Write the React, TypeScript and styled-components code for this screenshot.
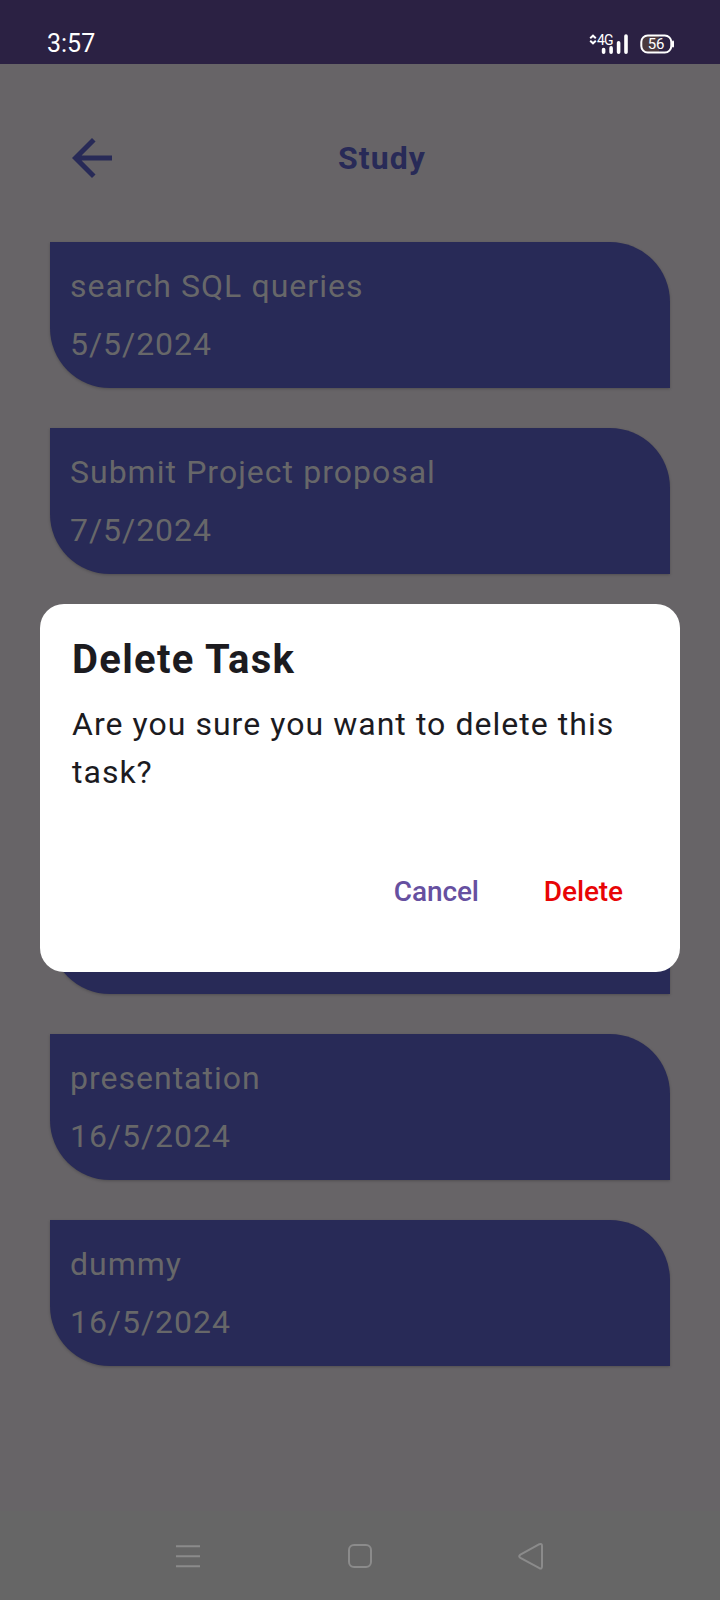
import React from "react";
import styled, { createGlobalStyle } from "styled-components";

const GlobalStyle = createGlobalStyle`
  * { box-sizing: border-box; }
  body {
    margin: 0;
    background: #676467;
    font-family: Roboto, "Liberation Sans", sans-serif;
  }
  button {
    border: 0;
    padding: 0;
    background: none;
    font: inherit;
    display: flex;
  }
`;

const Screen = styled.div`
  position: relative;
  display: flex;
  flex-direction: column;
  width: 720px;
  height: 1600px;
  overflow: hidden;
  background: #676467;
`;

const StatusBar = styled.header`
  display: flex;
  justify-content: space-between;
  align-items: flex-start;
  height: 64px;
  padding: 28px 45px 0 47px;
  background: #2b2143;
  color: #fff;
`;

const Clock = styled.time`
  font-size: 25px;
  line-height: 32px;
  letter-spacing: 0;
`;

const StatusIcons = styled.div`
  display: flex;
  gap: 12px;
  padding-top: 5px;
`;

const Signal = styled.div`
  position: relative;
  width: 39px;
  height: 22px;
  svg { display: block; }
`;

const Network = styled.span`
  position: absolute;
  left: 8px;
  top: 0;
  font-size: 14px;
  line-height: 14px;
  letter-spacing: -0.9px;
`;

const Battery = styled.div`
  display: grid;
  width: 35px;
  height: 22px;
  svg, span { grid-area: 1 / 1; }
`;

const BatteryLevel = styled.span`
  width: 32px;
  text-align: center;
  font-size: 15px;
  line-height: 22px;
  letter-spacing: -0.3px;
  z-index: 1;
`;

const TopBar = styled.nav`
  display: flex;
  align-items: center;
  height: 60px;
  margin: 64px 50px 54px 62px;
  color: #282a57;
`;

const BackButton = styled.button`
  width: 60px;
  color: inherit;
`;

const PageTitle = styled.h1`
  margin: 0 0 0 216px;
  font-size: 32px;
  line-height: 48px;
  font-weight: 700;
  letter-spacing: 1.1px;
`;

const TaskList = styled.main`
  display: flex;
  flex: 1;
  flex-direction: column;
  gap: 40px;
  padding: 0 50px;
`;

const Card = styled.article<{ $tall?: boolean }>`
  display: flex;
  flex-direction: column;
  gap: 10px;
  height: ${(p) => (p.$tall ? 194 : 146)}px;
  padding: 20px;
  border-radius: 0 60px 0 60px;
  background: #282a57;
  box-shadow: 0 1px 3px rgba(0, 0, 0, 0.22);
  color: #676769;
`;

const CardText = styled.div`
  font-size: 32px;
  line-height: 48px;
  letter-spacing: 1px;
  word-spacing: 0.3px;
  white-space: nowrap;
`;

const CardDate = styled(CardText)`
  letter-spacing: 0.95px;
`;

const NavBar = styled.footer`
  display: flex;
  justify-content: space-between;
  align-items: flex-start;
  height: 89px;
  padding: 29px 174px 0;
  background: #666;
  color: #8b8b8b;
  svg { display: block; }
`;

const Dialog = styled.section`
  position: absolute;
  left: 40px;
  top: 604px;
  width: 640px;
  height: 368px;
  display: flex;
  flex-direction: column;
  padding: 32px;
  border-radius: 24px;
  background: #fff;
  color: #1c1b1f;
`;

const DialogTitle = styled.h2`
  margin: 0 0 16px;
  font-size: 40px;
  line-height: 48px;
  font-weight: 700;
  letter-spacing: 1.3px;
`;

const DialogBody = styled.p`
  margin: 0;
  font-size: 32px;
  line-height: 48px;
  letter-spacing: 1px;
  word-spacing: 0.2px;
`;

const Actions = styled.div`
  display: flex;
  justify-content: flex-end;
  gap: 65px;
  margin-top: 76px;
  padding-right: 25px;
`;

const Action = styled.button<{ $danger?: boolean }>`
  font-size: 28px;
  line-height: 40px;
  font-weight: 500;
  letter-spacing: -0.1px;
  color: ${(p) => (p.$danger ? "#e80505" : "#6650a0")};
`;

const tasks = [
  { name: "search SQL queries", date: "5/5/2024" },
  { name: "Submit Project proposal", date: "7/5/2024" },
  {},
  { tall: true },
  { name: "presentation", date: "16/5/2024" },
  { name: "dummy", date: "16/5/2024" },
] as { name?: string; date?: string; tall?: boolean }[];

export default function App() {
  return (
    <Screen>
      <GlobalStyle />
      <StatusBar>
        <Clock>3:57</Clock>
        <StatusIcons>
          <Signal>
            <svg width="39" height="22" fill="none" stroke="#fff">
              <path d="M1.2 5.2 L4 2.7 L6.8 5.2 M1.2 7.8 L4 10.3 L6.8 7.8" strokeWidth="2" />
              <path d="M14.6 16.5v2.7M22.1 14.9v4.3M29.6 9.8v9.4M37 3v16.2" strokeWidth="3.6" strokeLinecap="round" />
            </svg>
            <Network>4G</Network>
          </Signal>
          <Battery>
            <svg width="35" height="22" fill="none">
              <path d="M8 3h11v16H8a6 6 0 0 1-6-6V9a6 6 0 0 1 6-6z" fill="#4b3a3e" />
              <rect x="1.3" y="2.5" width="30" height="17" rx="6.5" stroke="#fff" strokeWidth="2" />
              <path d="M33 8.6v4.8" stroke="#fff" strokeWidth="2" strokeLinecap="round" />
            </svg>
            <BatteryLevel>56</BatteryLevel>
          </Battery>
        </StatusIcons>
      </StatusBar>
      <TopBar>
        <BackButton aria-label="Back">
          <svg width="60" height="60" viewBox="0 0 24 24" fill="currentColor">
            <path d="M20 11H7.83l5.59-5.59L12 4l-8 8 8 8 1.41-1.41L7.83 13H20v-2z" />
          </svg>
        </BackButton>
        <PageTitle>Study</PageTitle>
      </TopBar>
      <TaskList>
        {tasks.map((task, i) => (
          <Card key={i} $tall={task.tall}>
            {task.name && <CardText>{task.name}</CardText>}
            {task.date && <CardDate>{task.date}</CardDate>}
          </Card>
        ))}
      </TaskList>
      <NavBar>
        <svg width="28" height="32" fill="none" stroke="currentColor" strokeWidth="2">
          <path d="M2 6.3h24M2 16.3h24M2 26.3h24" />
        </svg>
        <svg width="28" height="32" fill="none" stroke="currentColor" strokeWidth="2">
          <rect x="3" y="5" width="22" height="22" rx="5" />
        </svg>
        <svg width="28" height="32" fill="none" stroke="currentColor" strokeWidth="2" strokeLinejoin="round">
          <path d="M21.4 4.2 2.4 14.6q-2.4 1.6 0 3.2L21.4 28.2q2.6 1 2.6-1.6V5.8q0-2.6-2.6-1.6z" />
        </svg>
      </NavBar>
      <Dialog role="dialog">
        <DialogTitle>Delete Task</DialogTitle>
        <DialogBody>Are you sure you want to delete this task?</DialogBody>
        <Actions>
          <Action>Cancel</Action>
          <Action $danger>Delete</Action>
        </Actions>
      </Dialog>
    </Screen>
  );
}
